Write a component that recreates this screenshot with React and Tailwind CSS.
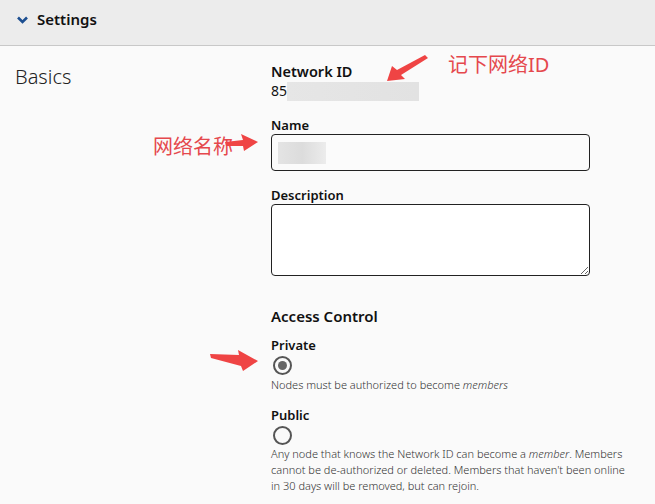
import React from 'react';

const font = { fontFamily: '"Noto Sans", "Noto Sans CJK SC", sans-serif' };

function RedArrow({ className, w, h, d }) {
  return (
    <svg className={className} width={w} height={h} viewBox={`0 0 ${w} ${h}`} fill="#ef4444">
      <path d={d} />
    </svg>
  );
}

function Radio({ checked }) {
  return (
    <span className="flex h-[19px] w-[19px] items-center justify-center rounded-full border-2 border-[#555]">
      {checked && <span className="h-[9px] w-[9px] rounded-full bg-[#666]" />}
    </span>
  );
}

export default function App() {
  return (
    <div className="relative h-[504px] w-[655px] overflow-hidden bg-[#fafafa] text-[#111]" style={font}>
      {/* Header */}
      <div className="flex h-[46px] items-center gap-[9px] border-b border-[#c8c8c8] bg-[#ececec] pl-[17px]">
        <svg width="11" height="8" viewBox="0 0 11 8" className="mt-[-6px]">
          <path d="M1 1.5 L5.5 6 L10 1.5" stroke="#1d4f91" strokeWidth="2.6" fill="none" />
        </svg>
        <span className="mt-[-6px] text-[15px] font-semibold">Settings</span>
      </div>

      <div className="flex">
        {/* Left title */}
        <div className="w-[271px] shrink-0 pl-[15px] pt-[16px]">
          <h2 className="text-[20px] font-light text-[#222]">Basics</h2>
        </div>

        {/* Right column */}
        <div className="w-[370px] pt-[15px]">
          <div className="relative">
            <div className="text-[14.5px] font-semibold leading-[20px]">Network ID</div>
            <div className="flex items-center text-[14px] leading-[20px]">
              <span>85</span>
              <span className="h-[19px] w-[132px] bg-gradient-to-r from-[#e6e6e6] to-[#e2e2e2]" />
            </div>
            <RedArrow
              className="absolute left-[114px] top-[-6px]"
              w={43}
              h={27}
              d="M2 26 L7 11 L12 15 L40 0 L43 3 L16 20 L20 24 Z"
            />
            <span className="absolute left-[177px] top-[-11px] whitespace-nowrap text-[20px] text-[#e5484d]">
              记下网络ID
            </span>
          </div>

          <div className="relative mt-[15px]">
            <div className="text-[13px] font-semibold leading-[18px]">Name</div>
            <div className="flex h-[37px] w-[319px] items-center rounded-[4px] border-[1.5px] border-[#222] bg-[#fbfbfb] px-[6px]">
              <span className="h-[22px] w-[48px] bg-gradient-to-r from-[#e4e4e4] via-[#dcdcdc] to-[#ececec]" />
            </div>
            <span className="absolute left-[-118px] top-[16px] whitespace-nowrap text-[20px] text-[#e5484d]">
              网络名称
            </span>
            <RedArrow
              className="absolute left-[-46px] top-[18px]"
              w={33}
              h={17}
              d="M0 8 L18 6 L16 0 L33 8 L19 17 L18 12 L1 12 Z"
            />
          </div>

          <div className="mt-[15px]">
            <div className="text-[13px] font-semibold leading-[18px]">Description</div>
            <textarea
              className="block h-[72px] w-[319px] resize-y rounded-[4px] border-[1.5px] border-[#222] bg-white"
              readOnly
            />
          </div>

          <div className="mt-[29px] text-[15px] font-semibold leading-[22px]">Access Control</div>

          <div className="relative mt-[9px]">
            <div className="text-[13px] font-semibold leading-[18px]">Private</div>
            <div className="ml-[2px] mt-[2px]">
              <Radio checked />
            </div>
            <p className="mt-[3px] text-[11px] font-light leading-[14px] text-[#333]">
              Nodes must be authorized to become <em>members</em>
            </p>
            <RedArrow
              className="absolute left-[-61px] top-[14px]"
              w={48}
              h={21}
              d="M0 4 L29 5 L28 0 L48 11 L33 21 L31 16 L1 8 Z"
            />
          </div>

          <div className="mt-[14px]">
            <div className="text-[13px] font-semibold leading-[18px]">Public</div>
            <div className="ml-[2px] mt-[2px]">
              <Radio />
            </div>
            <p className="mt-[1px] w-[362px] text-[11px] font-light leading-[16px] text-[#333]">
              Any node that knows the Network ID can become a <em>member</em>. Members cannot be
              de-authorized or deleted. Members that haven't been online in 30 days will be removed,
              but can rejoin.
            </p>
          </div>
        </div>
      </div>
    </div>
  );
}
